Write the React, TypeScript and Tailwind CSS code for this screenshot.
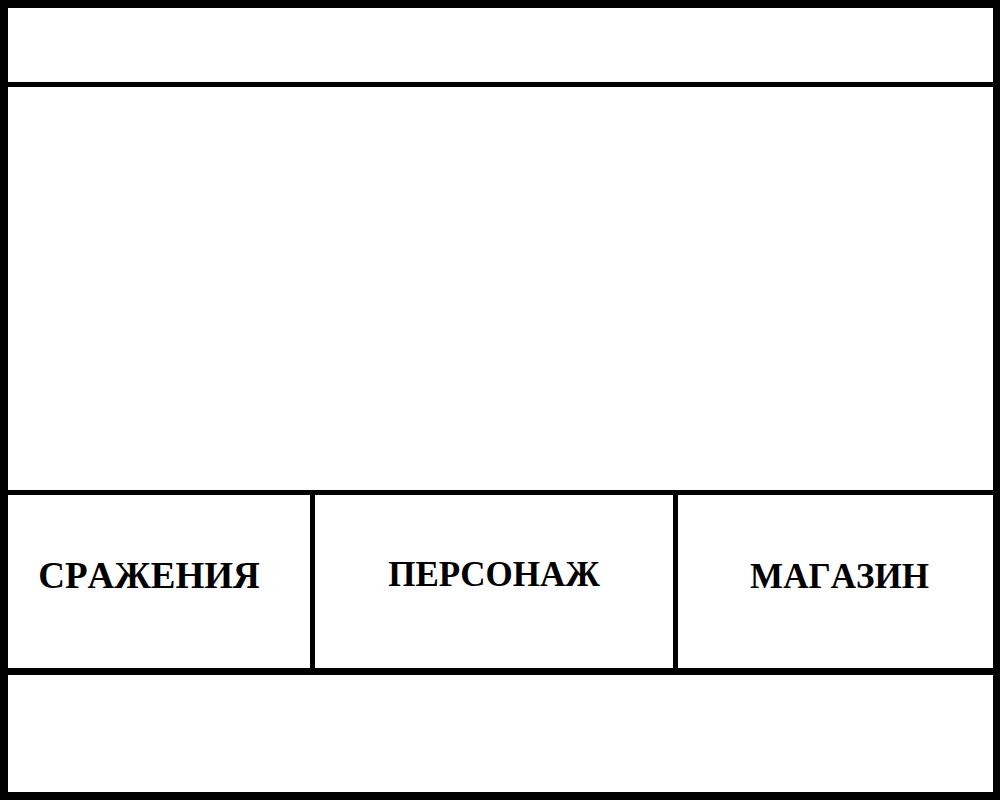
const actions = [
  { label: "СРАЖЕНИЯ", cell: "pr-5 pb-3 text-[37px]" },
  { label: "ПЕРСОНАЖ", cell: "pb-3 text-[35px]" },
  { label: "МАГАЗИН", cell: "pl-2 pb-2 text-[35px]" },
];

export default function App() {
  return (
    <div className="flex min-h-screen flex-col border-8 border-r-[7px] border-black bg-white text-black">
      <header className="h-[79px] border-b-[5px] border-black" />
      <main className="flex-1 border-b-[5px] border-black" />
      <nav className="grid h-[180px] grid-cols-[307fr_363fr_315fr] divide-x-[5px] divide-black border-b-[7px] border-black">
        {actions.map(({ label, cell }) => (
          <button
            key={label}
            type="button"
            className={`flex items-center justify-center border-black font-['Liberation_Serif',serif] font-bold [font-kerning:none] ${cell}`}
          >
            {label}
          </button>
        ))}
      </nav>
      <footer className="h-[117px]" />
    </div>
  );
}
